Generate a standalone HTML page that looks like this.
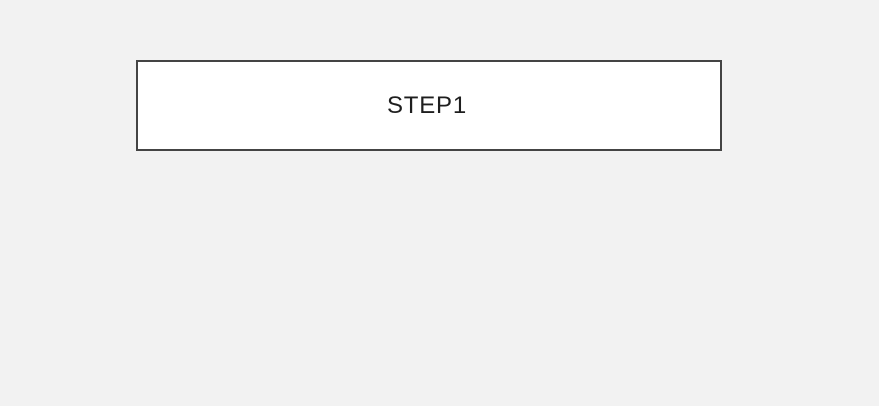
<!DOCTYPE html>
<html><head><style>
html,body{margin:0;padding:0;background:#f2f2f2;width:879px;height:406px;overflow:hidden}
.box{position:absolute;left:136px;top:60px;width:582px;height:87px;border:2px solid #444;background:#fff;display:flex;align-items:center;justify-content:center}
.t{font-family:"Liberation Sans",sans-serif;font-size:24px;letter-spacing:0.8px;color:#1e1e1e;margin-left:-4px;margin-top:1px}
</style></head><body>
<div class="box"><span class="t">STEP1</span></div>
</body></html>
